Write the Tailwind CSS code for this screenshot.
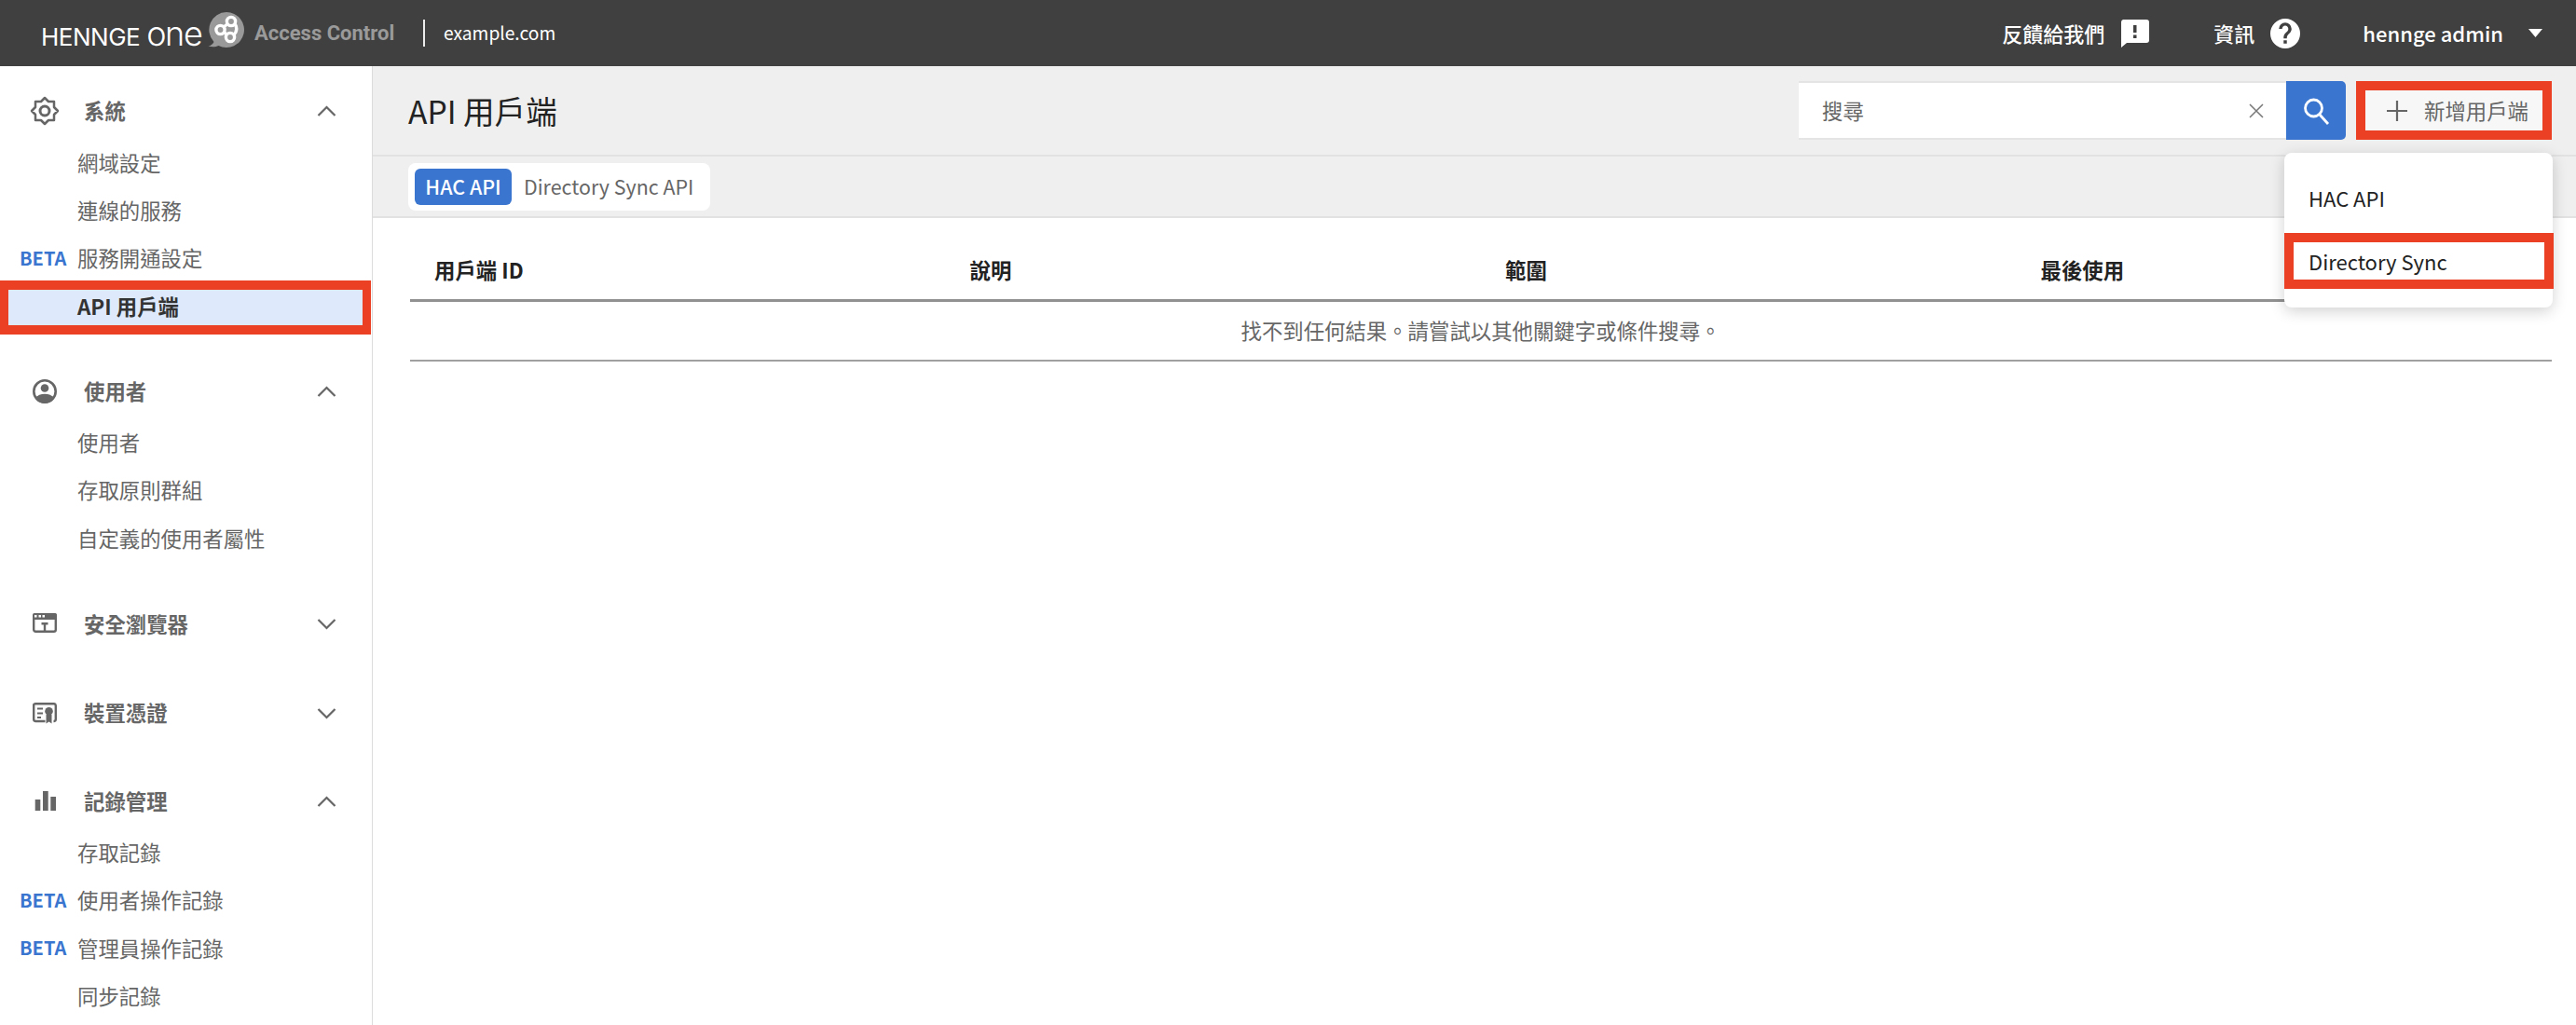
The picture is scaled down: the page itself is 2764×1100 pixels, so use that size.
<!doctype html>
<html lang="zh-Hant">
<head>
<meta charset="utf-8">
<script src="https://cdn.jsdelivr.net/npm/@tailwindcss/browser@4"></script>
</head>
<body class="m-0 h-[1100px] w-[2764px] overflow-hidden bg-white font-['Noto_Sans_CJK_TC','Noto_Sans',sans-serif] text-[22.4px] text-[#666]">
<header class="flex h-[71px] items-center bg-[#404040] text-[22px] text-white">
  <div class="ml-[44px] flex w-[178px] items-baseline whitespace-nowrap font-['Inter',sans-serif] text-[26px] font-normal leading-none tracking-[-0.5px]">HENNGE<span class="ml-[7px] text-[36px] font-light tracking-[-1.4px]">one</span></div>
  <svg class="mt-[-7px] h-[40px] w-[42px] shrink-0" viewBox="0 0 42 40"><path d="M21 1a19 19 0 1 1-8.500 36c-3 1.500-6.500 1.500-11 .8 3-1 5-2.800 6-4.800A19 19 0 0 1 21 1z" fill="#999"/><g fill="none" stroke="#fff" stroke-width="3.400"><circle cx="14.500" cy="20" r="4.600"/><circle cx="26" cy="11" r="4.600"/><circle cx="25" cy="28" r="4.600"/><path d="M18 17 22.500 13.500M18.500 22.500 21.500 25.500M30 13.500c2.500 4 2.500 8-1 12"/></g></svg>
  <span class="ml-[9px] w-[181px] font-['Roboto',sans-serif] text-[22px] font-bold text-[#9a9a9a]">Access Control</span>
  <span class="h-[29px] w-[2px] bg-white/90"></span>
  <span class="ml-[20px] text-[19.2px]">example.com</span>
  <div class="ml-auto flex items-center font-medium">
    <span>反饋給我們</span>
    <svg class="ml-[17px] h-[30px] w-[31px]" viewBox="0 0 31 30"><path fill="#fff" d="M3 0h25a3 3 0 0 1 3 3v19a3 3 0 0 1-3 3H7l-6 5V3a3 3 0 0 1 2-3z"/><rect x="14" y="6" width="3.500" height="8" fill="#404040"/><rect x="14" y="16.500" width="3.500" height="3.500" fill="#404040"/></svg>
    <span class="ml-[69px]">資訊</span>
    <svg class="ml-[17px] h-[32px] w-[32px]" viewBox="0 0 24 24"><path fill="#fff" d="M12 0a12 12 0 1 0 0 24 12 12 0 0 0 0-24zm1.300 20h-2.600v-2.600h2.600V20zm2.700-8.800-1.200 1.200c-1 1-1.500 1.700-1.500 3.600h-2.600v-.6c0-1.400.5-2.700 1.500-3.700l1.600-1.600c.5-.5.700-1.100.7-1.800 0-1.400-1.200-2.600-2.500-2.600S9.500 6.900 9.500 8.300H6.900a5.100 5.100 0 0 1 10.200 0c0 1.100-.4 2.100-1.100 2.900z"/></svg>
    <span class="ml-[67px]">hennge admin</span>
    <svg class="ml-[27px] mr-[36px] h-[9px] w-[15px]" viewBox="0 0 15 9"><path fill="#fff" d="M0 0h15l-7.500 9z"/></svg>
  </div>
</header>
<div class="flex h-[1029px]">
  <aside class="w-[400px] shrink-0 border-r border-[#dcdcdc] pt-[22px]">
    <div class="flex h-[52px] items-center pl-[32px] pr-[38px] font-bold">
      <svg class="h-[32px] w-[32px]" viewBox="0 0 32 32"><path d="M30 16 26 20V26H20L16 30 12 26H6V20L2 16 6 12V6H12L16 2 20 6H26V12Z" fill="none" stroke="#666" stroke-width="2.500" stroke-linejoin="round"/><circle cx="16" cy="16" r="5" fill="none" stroke="#666" stroke-width="3"/></svg>
      <span class="ml-[26px]">系統</span>
      <svg class="ml-auto h-[14px] w-[21px]" viewBox="0 0 21 14"><path d="M1.500 12 10.500 3l9 9" fill="none" stroke="#666" stroke-width="2.200"/></svg>
    </div>
    <ul class="mt-[4px]">
      <li class="flex h-[51.3px] items-center pl-[83px]">網域設定</li>
      <li class="flex h-[51.3px] items-center pl-[83px]">連線的服務</li>
      <li class="flex h-[51.3px] items-center pl-[21px]"><span class="w-[62px] text-[20px] font-bold text-[#3a75cf]">BETA</span>服務開通設定</li>
      <li class="relative flex h-[51.3px] items-center pl-[83px] font-bold text-[#333]">
        <span class="absolute left-0 top-[-2px] h-[58px] w-[398px] border-y-[10px] border-x-[9px] border-[#ec4025] bg-[#deeafb]"></span>
        <span class="relative">API 用戶端</span>
      </li>
    </ul>
    <div class="mt-[40px] flex h-[52px] items-center pl-[32px] pr-[38px] font-bold">
      <svg class="h-[32px] w-[32px]" viewBox="0 0 32 32"><circle cx="16" cy="16" r="11.700" fill="none" stroke="#666" stroke-width="2.600"/><circle cx="16" cy="12.500" r="4.300" fill="#666"/><path d="M6 23.500c2-3.300 6-4.700 10-4.700s8 1.400 10 4.700A13 13 0 0 1 16 29 13 13 0 0 1 6 23.500z" fill="#666"/></svg>
      <span class="ml-[26px]">使用者</span>
      <svg class="ml-auto h-[14px] w-[21px]" viewBox="0 0 21 14"><path d="M1.500 12 10.500 3l9 9" fill="none" stroke="#666" stroke-width="2.200"/></svg>
    </div>
    <ul class="mt-[3px]">
      <li class="flex h-[51.3px] items-center pl-[83px]">使用者</li>
      <li class="flex h-[51.3px] items-center pl-[83px]">存取原則群組</li>
      <li class="flex h-[51.3px] items-center pl-[83px]">自定義的使用者屬性</li>
    </ul>
    <div class="mt-[41px] flex h-[52px] items-center pl-[32px] pr-[38px] font-bold">
      <svg class="h-[32px] w-[32px]" viewBox="0 0 32 32"><rect x="4.200" y="5.200" width="23.600" height="18.600" rx="2" fill="none" stroke="#666" stroke-width="2.400"/><rect x="3" y="4" width="26" height="7" rx="2" fill="#666"/><g fill="#fff"><rect x="5" y="6" width="2.500" height="2.500"/><rect x="9.500" y="6" width="2.500" height="2.500"/><rect x="13.500" y="6" width="2.500" height="2.500"/></g><path d="M12.500 14h7v2.500h-2.300V23h-2.400v-6.500h-2.300z" fill="#666"/></svg>
      <span class="ml-[26px]">安全瀏覽器</span>
      <svg class="ml-auto h-[14px] w-[21px]" viewBox="0 0 21 14"><path d="M1.500 2 10.500 11l9-9" fill="none" stroke="#666" stroke-width="2.200"/></svg>
    </div>
    <div class="mt-[43px] flex h-[52px] items-center pl-[32px] pr-[38px] font-bold">
      <svg class="h-[32px] w-[32px]" viewBox="0 0 32 32"><path d="M16.500 25H6a2 2 0 0 1-1.800-2V7.200A2 2 0 0 1 6 6.200h20a2 2 0 0 1 1.800 1.800V23a2 2 0 0 1-1.800 2h-.5" fill="none" stroke="#666" stroke-width="2.400"/><path d="M8 10.500h6v2H8zM8 15.500h6v2H8zM8 20h4v2H8z" fill="#666"/><circle cx="20.500" cy="14.300" r="4.300" fill="#666"/><path d="M17.500 18h6v9.500l-3-2-3 2z" fill="#666"/></svg>
      <span class="ml-[26px]">裝置憑證</span>
      <svg class="ml-auto h-[14px] w-[21px]" viewBox="0 0 21 14"><path d="M1.500 3 10.500 12l9-9" fill="none" stroke="#666" stroke-width="2.200"/></svg>
    </div>
    <div class="mt-[43px] flex h-[52px] items-center pl-[32px] pr-[38px] font-bold">
      <svg class="h-[32px] w-[32px]" viewBox="0 0 32 32"><path d="M5.700 14h5.600v12H5.700zM14 5h5.700v21H14zM22.300 11H28v15h-5.700z" fill="#666"/></svg>
      <span class="ml-[26px]">記錄管理</span>
      <svg class="ml-auto h-[14px] w-[21px]" viewBox="0 0 21 14"><path d="M1.500 12 10.500 3l9 9" fill="none" stroke="#666" stroke-width="2.200"/></svg>
    </div>
    <ul class="mt-[3px]">
      <li class="flex h-[51.3px] items-center pl-[83px]">存取記錄</li>
      <li class="flex h-[51.3px] items-center pl-[21px]"><span class="w-[62px] text-[20px] font-bold text-[#3a75cf]">BETA</span>使用者操作記錄</li>
      <li class="flex h-[51.3px] items-center pl-[21px]"><span class="w-[62px] text-[20px] font-bold text-[#3a75cf]">BETA</span>管理員操作記錄</li>
      <li class="flex h-[51.3px] items-center pl-[83px]">同步記錄</li>
    </ul>
  </aside>
  <main class="relative min-w-0 flex-1">
    <div class="flex h-[97px] items-center border-b-2 border-[#e2e2e2] bg-[#efefef] pl-[38px] pr-[26px]">
      <h1 class="pt-[2px] text-[33.6px] font-normal text-[#222]">API 用戶端</h1>
      <div class="ml-auto flex h-[63px] items-stretch">
        <div class="flex w-[523px] items-center border-y-2 border-[#e4e4e4] bg-white pl-[25px] pr-[24px]">
          <span>搜尋</span>
          <svg class="ml-auto h-[16px] w-[16px]" viewBox="0 0 16 16"><path d="M1 1l14 14M15 1 1 15" stroke="#777" stroke-width="1.500"/></svg>
        </div>
        <div class="flex w-[64px] items-center justify-center rounded-r-[5px] bg-[#3a75cf]">
          <svg class="h-[32px] w-[32px]" viewBox="0 0 32 32"><circle cx="13.500" cy="13" r="9" fill="none" stroke="#fff" stroke-width="2.800"/><path d="m20 20 9 10" stroke="#fff" stroke-width="2.800"/></svg>
        </div>
        <div class="ml-[11px] flex w-[210px] items-center border-[10px] border-[#ec4025] bg-[#f7f7f7] pl-[23px]">
          <svg class="h-[22px] w-[22px]" viewBox="0 0 22 22"><path d="M11 0v22M0 11h22" stroke="#666" stroke-width="2.200"/></svg>
          <span class="ml-[18px] whitespace-nowrap">新增用戶端</span>
        </div>
      </div>
    </div>
    <div class="flex h-[66px] items-center border-b-2 border-[#e2e2e2] bg-[#efefef] pl-[38px]">
      <div class="flex h-[51px] w-[324px] items-center rounded-[8px] bg-white pl-[7px] text-[21.4px]">
        <span class="flex h-[39px] w-[104px] items-center justify-center rounded-[6px] bg-[#3a75cf] font-medium text-white">HAC API</span>
        <span class="ml-[13px]">Directory Sync API</span>
      </div>
    </div>
    <div class="ml-[40px] mr-[26px]">
      <div class="grid h-[90px] grid-cols-4 items-center border-b-[3px] border-[#919191] pb-[1px] pt-[25px] font-bold text-[#222]">
        <span class="pl-[26px]">用戶端 ID</span>
        <span class="pl-[26px]">說明</span>
        <span class="pl-[26px]">範圍</span>
        <span class="pl-[26px]">最後使用</span>
      </div>
      <div class="flex h-[64px] items-center justify-center border-b-2 border-[#a0a0a0]">找不到任何結果。請嘗試以其他關鍵字或條件搜尋。</div>
    </div>
    <div class="absolute left-[2051px] top-[93px] h-[166px] w-[288px] rounded-[8px] bg-white text-[22px] shadow-[0_4px_16px_rgba(0,0,0,0.18)]">
      <div class="flex h-[96px] items-center pl-[26px] text-[#222]">HAC API</div>
      <div class="absolute left-0 top-[86px] flex h-[60px] w-[289px] items-center border-[10px] border-[#ec4025] bg-white pl-[16px] text-[#222]">Directory Sync</div>
    </div>
  </main>
</div>
</body>
</html>
